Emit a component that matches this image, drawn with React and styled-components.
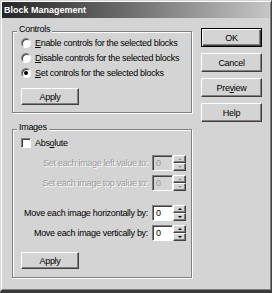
import React from "react";
import styled, { createGlobalStyle, css } from "styled-components";

const GlobalStyle = createGlobalStyle`
  html, body {
    margin: 0;
    padding: 0;
    background: #d4d4d4;
  }
  body {
    font-family: "Liberation Sans", Arial, sans-serif;
    font-size: 9px;
    letter-spacing: -0.3px;
    color: #000;
  }
`;

const Window = styled.div`
  width: 272px;
  height: 293px;
  box-sizing: border-box;
  background: #d4d4d4;
  border: 1px solid;
  border-bottom-width: 3px;
  border-color: #d4d4d4 #404040 #3a3a3a #d4d4d4;
  box-shadow: inset 1px 1px #fff, inset -1px -1px #808080;
  padding: 1px;
  display: flex;
  flex-direction: column;
`;

const TitleBar = styled.div`
  height: 16px;
  line-height: 16px;
  padding-left: 2px;
  background: linear-gradient(to right, #262626, #6a6a6a 45%, #c6c6c6);
  color: #fff;
  font-weight: bold;
  letter-spacing: 0;
`;

const Body = styled.div`
  display: flex;
  gap: 9px;
  padding: 10px 8px 0 10px;
`;

const LeftColumn = styled.div`
  width: 180px;
  padding-top: 3px;
  display: flex;
  flex-direction: column;
  gap: 16px;
`;

const RightColumn = styled.div`
  width: 61px;
  display: flex;
  flex-direction: column;
  gap: 6px;
`;

const GroupBox = styled.div`
  border: 1px solid #808080;
  box-shadow: inset 1px 1px #fff, 1px 1px #fff;
  padding: 0 5px ${(p) => p.$padBottom}px 8px;
  display: flex;
  flex-direction: column;
  align-items: flex-start;
`;

const Caption = styled.div`
  margin: -8px 0 0 -4px;
  padding: 0 2px;
  line-height: 11px;
  background: #d4d4d4;
`;

const OptionList = styled.div`
  display: flex;
  flex-direction: column;
`;

const OptionRow = styled.label`
  display: flex;
  align-items: center;
  gap: 4px;
  height: 15px;
  margin-top: ${(p) => p.$top || 0}px;
`;

const Radio = styled.span`
  width: 10px;
  height: 10px;
  box-sizing: border-box;
  border-radius: 50%;
  border: 1px solid;
  border-color: #808080 #fff #fff #808080;
  box-shadow: inset 1px 1px #404040;
  background: #fff;
  display: flex;
  align-items: center;
  justify-content: center;
  &::after {
    content: "";
    width: 4px;
    height: 4px;
    border-radius: 50%;
    background: ${(p) => (p.$checked ? "#000" : "transparent")};
  }
`;

const Checkbox = styled.span`
  width: 10px;
  height: 10px;
  box-sizing: border-box;
  border: 1px solid;
  border-color: #808080 #fff #fff #808080;
  box-shadow: inset 1px 1px #404040;
  background: #fff;
`;

const Button = styled.button`
  width: ${(p) => (p.$small ? 58 : 61)}px;
  height: ${(p) => (p.$small ? 17 : 19)}px;
  box-sizing: border-box;
  margin: 0;
  padding: 0;
  font: inherit;
  letter-spacing: inherit;
  color: #000;
  background: #d4d4d4;
  border: 1px solid;
  border-color: #fff #404040 #404040 #fff;
  box-shadow: inset -1px -1px #808080;
  margin-top: ${(p) => p.$top || 0}px;
  ${(p) =>
    p.$default &&
    css`
      border-color: #000;
      box-shadow: inset 1px 1px #fff, inset -1px -1px #404040,
        inset -2px -2px #808080;
    `}
`;

const SpinGrid = styled.div`
  align-self: stretch;
  display: grid;
  grid-template-columns: 1fr 34px;
  column-gap: 4px;
  row-gap: 4px;
  margin-top: ${(p) => p.$top}px;
`;

const SpinLabel = styled.div`
  text-align: right;
  line-height: 16px;
  white-space: nowrap;
  ${(p) =>
    p.$disabled &&
    css`
      color: #9a9a9a;
      text-shadow: 1px 1px #fff;
    `}
`;

const Spinner = styled.div`
  display: flex;
  height: 16px;
`;

const SpinInput = styled.div`
  width: 21px;
  box-sizing: border-box;
  border: 1px solid;
  border-color: #808080 #fff #fff #808080;
  box-shadow: inset 1px 1px #404040;
  background: ${(p) => (p.$disabled ? "#d4d4d4" : "#fff")};
  color: ${(p) => (p.$disabled ? "#9a9a9a" : "#000")};
  padding-left: 3px;
  line-height: 14px;
`;

const SpinButtons = styled.div`
  width: 13px;
  display: flex;
  flex-direction: column;
`;

const SpinButton = styled.div`
  flex: 1;
  box-sizing: border-box;
  border: 1px solid;
  border-color: #fff #404040 #404040 #fff;
  box-shadow: inset -1px -1px #808080;
  display: flex;
  align-items: center;
  justify-content: center;
  &::after {
    content: "";
    width: 0;
    height: 0;
    border-left: 2px solid transparent;
    border-right: 2px solid transparent;
    ${(p) =>
      p.$up
        ? css`border-bottom: 2px solid ${p.$disabled ? "#9a9a9a" : "#000"};`
        : css`border-top: 2px solid ${p.$disabled ? "#9a9a9a" : "#000"};`}
  }
`;

const SpinBox = ({ disabled }) => (
  <Spinner>
    <SpinInput $disabled={disabled}>0</SpinInput>
    <SpinButtons>
      <SpinButton $up $disabled={disabled} />
      <SpinButton $disabled={disabled} />
    </SpinButtons>
  </Spinner>
);

const controlOptions = [
  { key: "E", rest: "nable controls for the selected blocks", checked: false },
  { key: "D", rest: "isable controls for the selected blocks", checked: false },
  { key: "S", rest: "et controls for the selected blocks", checked: true },
];

const App = () => {
  return (
    <>
      <GlobalStyle />
      <Window>
        <TitleBar>Block Management</TitleBar>
        <Body>
          <LeftColumn>
            <GroupBox $padBottom={7}>
              <Caption>Controls</Caption>
              <OptionList>
                {controlOptions.map((o) => (
                  <OptionRow key={o.key}>
                    <Radio $checked={o.checked} />
                    <span>
                      <u>{o.key}</u>
                      {o.rest}
                    </span>
                  </OptionRow>
                ))}
              </OptionList>
              <Button $small $top={8}>
                Apply
              </Button>
            </GroupBox>

            <GroupBox $padBottom={8}>
              <Caption>Images</Caption>
              <OptionRow $top={2}>
                <Checkbox />
                <span>
                  Abs<u>o</u>lute
                </span>
              </OptionRow>
              <SpinGrid $top={5}>
                <SpinLabel $disabled>Set each image left value to:</SpinLabel>
                <SpinBox disabled />
                <SpinLabel $disabled>Set each image top value to:</SpinLabel>
                <SpinBox disabled />
              </SpinGrid>
              <SpinGrid $top={14}>
                <SpinLabel>Move each image horizontally by:</SpinLabel>
                <SpinBox />
                <SpinLabel>Move each image vertically by:</SpinLabel>
                <SpinBox />
              </SpinGrid>
              <Button $small $top={11}>
                Apply
              </Button>
            </GroupBox>
          </LeftColumn>

          <RightColumn>
            <Button $default>OK</Button>
            <Button>Cancel</Button>
            <Button>
              Pre<u>v</u>iew
            </Button>
            <Button>Help</Button>
          </RightColumn>
        </Body>
      </Window>
    </>
  );
};

export default App;
